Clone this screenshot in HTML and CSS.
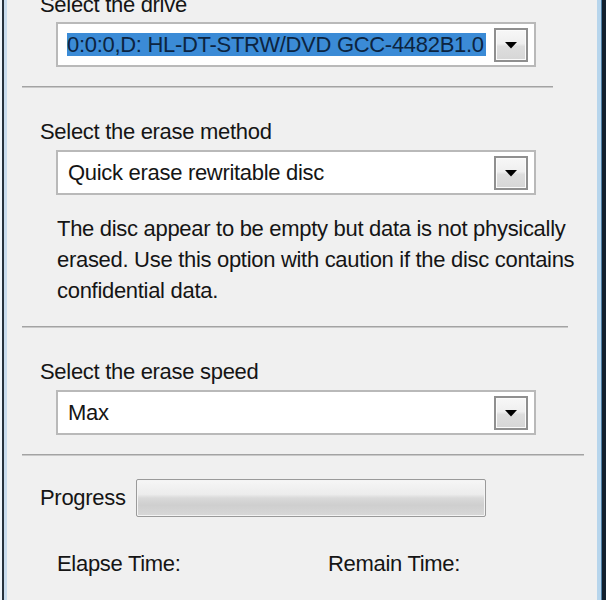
FILE: index.html
```html
<!DOCTYPE html>
<html>
<head>
<meta charset="utf-8">
<link rel="stylesheet" href="styles.css">
</head>
<body>
<div class="window">
  <div class="edge-left"></div>
  <main class="content">
    <div class="label first">Select the drive</div>
    <div class="combo">
      <div class="combo-value"><span class="selected">0:0:0,D: HL-DT-STRW/DVD GCC-4482B1.0</span></div>
      <div class="combo-btn"><svg width="14" height="8" viewBox="0 0 14 8"><polygon points="1,1 13,1 7,7.5" fill="#000"/></svg></div>
    </div>
    <div class="sep sep1"></div>

    <div class="label">Select the erase method</div>
    <div class="combo">
      <div class="combo-value">Quick erase rewritable disc</div>
      <div class="combo-btn"><svg width="14" height="8" viewBox="0 0 14 8"><polygon points="1,1 13,1 7,7.5" fill="#000"/></svg></div>
    </div>
    <p class="desc">The disc appear to be empty but data is not physically<br>erased. Use this option with caution if the disc contains<br>confidential data.</p>
    <div class="sep sep2"></div>

    <div class="label">Select the erase speed</div>
    <div class="combo">
      <div class="combo-value">Max</div>
      <div class="combo-btn"><svg width="14" height="8" viewBox="0 0 14 8"><polygon points="1,1 13,1 7,7.5" fill="#000"/></svg></div>
    </div>
    <div class="sep sep3"></div>

    <div class="progress-row">
      <span class="progress-label">Progress</span>
      <div class="progress-bar"></div>
    </div>
    <div class="times">
      <span>Elapse Time:</span>
      <span>Remain Time:</span>
    </div>
  </main>
  <div class="edge-right"></div>
</div>
</body>
</html>
```

FILE: styles.css
```css
html, body {
  margin: 0;
  padding: 0;
  height: 600px;
  overflow: hidden;
  background: #f0f0f0;
}

.window {
  display: flex;
  height: 600px;
  font-family: "Liberation Sans", Arial, sans-serif;
  font-size: 22px;
  letter-spacing: -0.3px;
  line-height: 26px;
  color: #151515;
}

.edge-left {
  width: 7px;
  flex: none;
  background: linear-gradient(to right, #eef4fa 0 2px, #26313c 2px 4px, #c9dcee 4px 7px);
}

.edge-right {
  width: 9px;
  flex: none;
  background: linear-gradient(to right, #b7d5ec 0 4px, #4d7da3 4px 5px, #12202e 5px 9px);
}

.content {
  flex: 1;
  padding-left: 15px;
  display: flex;
  flex-direction: column;
  align-items: flex-start;
}

.label {
  margin-left: 18px;
  margin-top: 31px;
}

.label.first {
  margin-top: -8px;
}

.combo {
  margin-left: 34px;
  margin-top: 5px;
  width: 480px;
  height: 45px;
  box-sizing: border-box;
  border: 2px solid #b9b9b9;
  background: #fff;
  display: flex;
  align-items: center;
  padding: 0 6px 0 8px;
}

.label.first + .combo {
  margin-top: 4px;
}

.combo-value {
  flex: 1;
  padding-left: 2px;
  white-space: nowrap;
  overflow: hidden;
}

.selected {
  background: #3b8bd6;
  color: #0c2440;
  display: inline-block;
  line-height: 23px;
  padding: 0 2px 0 0;
  margin-left: -1px;
}

.combo-btn {
  width: 34px;
  height: 34px;
  box-sizing: border-box;
  border: 2px solid #8f8f8f;
  box-shadow: inset 0 0 0 1px #fbfbfb;
  background: linear-gradient(#f7f7f7 0%, #efefef 45%, #dedede 55%, #d6d6d6 100%);
  display: flex;
  align-items: center;
  justify-content: center;
  margin-top: 1px;
}

.sep {
  height: 0;
  border-top: 1px solid #a3a3a3;
  border-bottom: 1px solid #c9c9c9;
  margin-top: 19px;
}

.sep1 { width: 531px; }
.sep2 { width: 546px; margin-top: 20px; }
.sep3 { width: 562px; }

.desc {
  margin: 18px 0 0 35px;
  line-height: 31px;
  white-space: nowrap;
}

.progress-row {
  margin-top: 23px;
  margin-left: 18px;
  display: flex;
  align-items: center;
}

.progress-label {
  width: 96px;
}

.progress-bar {
  width: 350px;
  height: 38px;
  box-sizing: border-box;
  border: 1px solid #9a9a9a;
  border-radius: 2px;
  box-shadow: inset 0 0 0 1px #f4f4f4;
  background: linear-gradient(#f6f6f6 0%, #ececec 40%, #d9d9d9 50%, #cfcfcf 70%, #d8d8d8 100%);
}

.times {
  margin-top: 34px;
  margin-left: 35px;
  display: grid;
  grid-template-columns: 271px auto;
}
```
